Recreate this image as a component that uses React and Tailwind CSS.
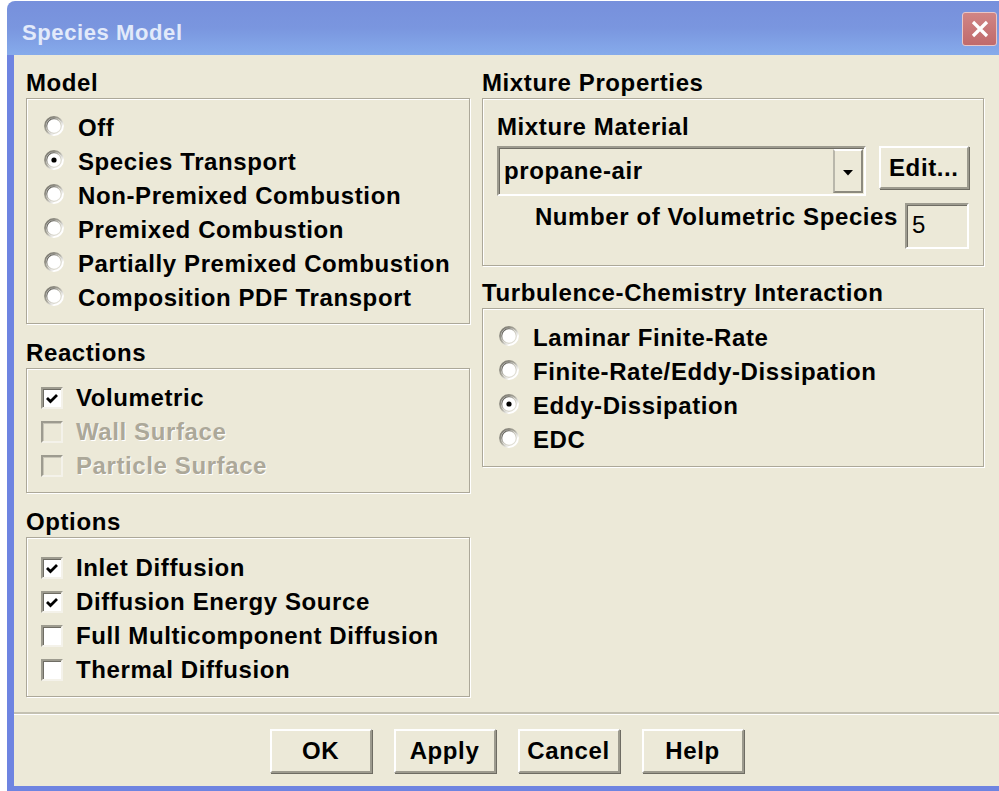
import React from 'react';

const FONT = "font-['Liberation_Sans',Arial,sans-serif]";

// classic sunken radio button
function RadioDot({on}) {
    return (
        <svg width="20" height="20" viewBox="0 0 20 20" className="shrink-0 mb-[4px]">
            <defs>
                <linearGradient id="radioOuter" x1="0" y1="0" x2="1" y2="1">
                    <stop offset="0" stopColor="#6f6d64"/>
                    <stop offset="0.45" stopColor="#a9a79c"/>
                    <stop offset="0.75" stopColor="#ffffff"/>
                </linearGradient>
                <linearGradient id="radioInner" x1="0" y1="0" x2="1" y2="1">
                    <stop offset="0" stopColor="#3c3b36"/>
                    <stop offset="0.5" stopColor="#c8c6bc"/>
                    <stop offset="1" stopColor="#ebe9df"/>
                </linearGradient>
            </defs>
            <circle cx="10" cy="10" r="9" fill="#fff" stroke="url(#radioOuter)" strokeWidth="1.8"/>
            <circle cx="10" cy="10" r="7.3" fill="#fff" stroke="url(#radioInner)" strokeWidth="1.2"/>
            {on && <circle cx="10" cy="10" r="2.6" fill="#000"/>}
        </svg>
    );
}

function CheckBox({on, disabled}) {
    return (
        <span
            className={`w-[22px] h-[22px] shrink-0 flex items-center justify-center border-2 border-t-[#9d9b8f] border-l-[#9d9b8f] border-b-[#f4f2ea] border-r-[#f4f2ea] ${disabled ? 'bg-[#ece9d8] shadow-[inset_1px_1px_0_#c9c6b8]' : 'bg-white shadow-[inset_1px_1px_0_#6f6d64]'}`}>
            {on && (
                <svg width="14" height="13" viewBox="0 0 14 13">
                    <path d="M2 6 L5.5 9.5 L12 3" fill="none" stroke="#000" strokeWidth="2.8"/>
                </svg>
            )}
        </span>
    );
}

function RadioRow({label, on, pad = 'pl-[17px]'}) {
    return (
        <div className={`h-[34px] flex items-center gap-[14px] ${pad}`}>
            <RadioDot on={on}/>
            <span>{label}</span>
        </div>
    );
}

function CheckRow({label, on, disabled}) {
    return (
        <div className="h-[34px] flex items-center gap-[13px] pl-[14px]">
            <CheckBox on={on} disabled={disabled}/>
            <span className={disabled ? 'text-[#aca899] [text-shadow:1px_1px_0_#ffffff]' : ''}>{label}</span>
        </div>
    );
}

function Group({title, className = '', boxClass = '', children}) {
    return (
        <div className={className}>
            <div className="h-[24px] leading-[24px]">{title}</div>
            <div
                className={`mt-[3px] border border-[#aca899] shadow-[inset_1px_1px_0_#ffffff,1px_1px_0_#ffffff] ${boxClass}`}>
                {children}
            </div>
        </div>
    );
}

function XpButton({label, className = ''}) {
    return (
        <div
            className={`flex items-center justify-center bg-[#ece9d8] border-2 border-t-white border-l-white border-b-[#9c9a8e] border-r-[#9c9a8e] shadow-[1px_1px_0_#6e6c63] ${className}`}>
            {label}
        </div>
    );
}

function TitleBar() {
    return (
        <div
            className="h-[54px] shrink-0 rounded-tl-[8px] bg-gradient-to-b from-[#7790dc] via-[#7a96df] to-[#86abeb] flex items-start pl-[15px] pr-[2px]">
            <span className="mt-[20px] text-[22px] leading-[24px] tracking-[0.6px] text-[#e2eafa]">Species Model</span>
            <div
                className="ml-auto mt-[11px] w-[35px] h-[34px] rounded-[3px] border border-[#e9c6c6] bg-gradient-to-b from-[#d08585] to-[#c06a6c] flex items-center justify-center">
                <svg width="20" height="20" viewBox="0 0 20 20">
                    <path d="M3 3 L17 17 M17 3 L3 17" stroke="#fff" strokeWidth="3.2"/>
                </svg>
            </div>
        </div>
    );
}

export default function App() {
    return (
        <div
            className={`w-[999px] h-[791px] bg-white overflow-hidden pl-[7px] pt-[1px] ${FONT} font-bold text-[24px] tracking-[0.6px] text-black`}>
            <div className="h-[790px] w-[992px] flex flex-col">
                <TitleBar/>
                <div className="flex-1 flex flex-col bg-[#ece9d8] border-l-[7px] border-b-[5px] border-[#6e84e1]">
                    <div className="flex gap-[12px] pl-[12px] pt-[16px]">
                        {/* left column */}
                        <div className="w-[444px] flex flex-col">
                            <Group title="Model" boxClass="pt-[12px] pb-[8px]">
                                <RadioRow label="Off"/>
                                <RadioRow label="Species Transport" on/>
                                <RadioRow label="Non-Premixed Combustion"/>
                                <RadioRow label="Premixed Combustion"/>
                                <RadioRow label="Partially Premixed Combustion"/>
                                <RadioRow label="Composition PDF Transport"/>
                            </Group>
                            <Group title="Reactions" className="mt-[17px]" boxClass="pt-[12px] pb-[9px]">
                                <CheckRow label="Volumetric" on/>
                                <CheckRow label="Wall Surface" disabled/>
                                <CheckRow label="Particle Surface" disabled/>
                            </Group>
                            <Group title="Options" className="mt-[17px]" boxClass="pt-[13px] pb-[9px]">
                                <CheckRow label="Inlet Diffusion" on/>
                                <CheckRow label="Diffusion Energy Source" on/>
                                <CheckRow label="Full Multicomponent Diffusion"/>
                                <CheckRow label="Thermal Diffusion"/>
                            </Group>
                        </div>

                        {/* right column */}
                        <div className="w-[502px] flex flex-col">
                            <Group title="Mixture Properties" boxClass="pt-[16px] pb-[16px] px-[14px]">
                                <div className="h-[24px] leading-[24px]">Mixture Material</div>
                                <div className="mt-[7px] flex items-start gap-[13px]">
                                    <div
                                        className="w-[371px] h-[50px] flex items-center border-2 border-t-[#9d9b8f] border-l-[#9d9b8f] border-b-white border-r-white shadow-[inset_1px_1px_0_#6f6d64] pl-[5px] pr-[1px]">
                                        <span className="flex-1">propane-air</span>
                                        <div
                                            className="w-[30px] h-[44px] flex items-center justify-center border-2 border-t-white border-l-[#b9b7ab] border-b-[#8c8a7e] border-r-[#8c8a7e]">
                                            <svg width="10" height="6" viewBox="0 0 10 6" className="mt-[4px]">
                                                <path d="M0 0 H10 L5 5.5 Z" fill="#000"/>
                                            </svg>
                                        </div>
                                    </div>
                                    <XpButton label="Edit..." className="w-[91px] h-[43px]"/>
                                </div>
                                <div className="mt-[7px] flex items-start justify-end gap-[7px]">
                                    <span className="mt-[2px] leading-[24px]">Number of Volumetric Species</span>
                                    <div
                                        className="w-[64px] h-[46px] border-2 border-t-[#9d9b8f] border-l-[#9d9b8f] border-b-white border-r-white shadow-[inset_1px_1px_0_#6f6d64] pl-[5px] pt-[8px] leading-[24px] font-normal">
                                        5
                                    </div>
                                </div>
                            </Group>
                            <Group title="Turbulence-Chemistry Interaction" className="mt-[15px]"
                                   boxClass="pt-[12px] pb-[9px]">
                                <RadioRow label="Laminar Finite-Rate" pad="pl-[16px]"/>
                                <RadioRow label="Finite-Rate/Eddy-Dissipation" pad="pl-[16px]"/>
                                <RadioRow label="Eddy-Dissipation" on pad="pl-[16px]"/>
                                <RadioRow label="EDC" pad="pl-[16px]"/>
                            </Group>
                        </div>
                    </div>

                    <div className="flex-1"/>

                    {/* button bar */}
                    <div className="h-[2px] bg-[#c4c1b2]"/>
                    <div className="h-[1px] bg-white"/>
                    <div className="flex justify-center gap-[22px] pt-[14px] pb-[13px]">
                        <XpButton label="OK" className="w-[102px] h-[44px]"/>
                        <XpButton label="Apply" className="w-[102px] h-[44px]"/>
                        <XpButton label="Cancel" className="w-[102px] h-[44px]"/>
                        <XpButton label="Help" className="w-[102px] h-[44px]"/>
                    </div>
                </div>
            </div>
        </div>
    );
}
